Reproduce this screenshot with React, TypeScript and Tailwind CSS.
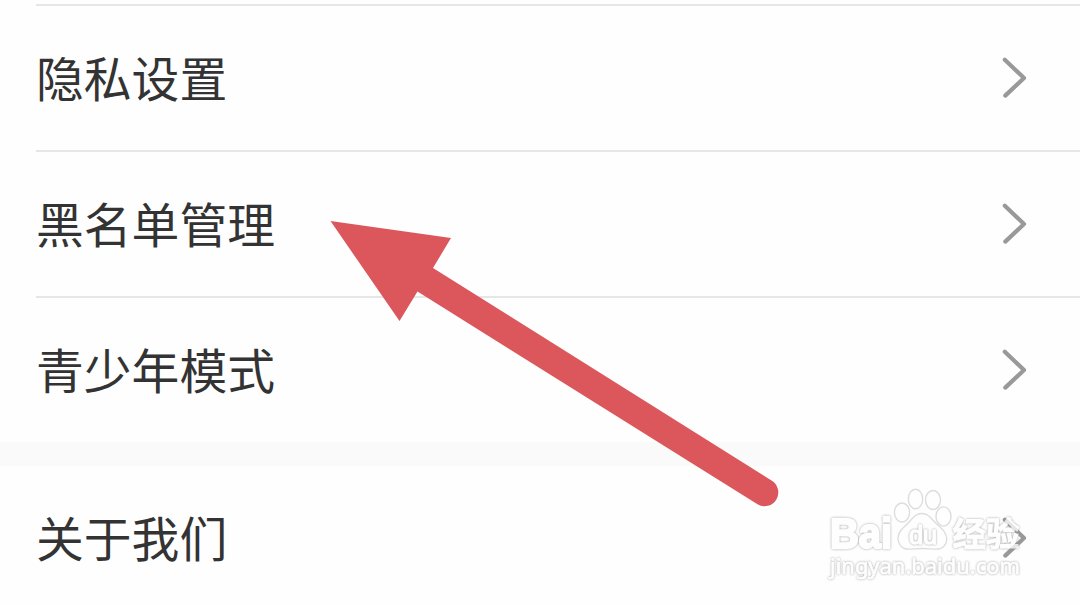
import React from "react";

const groups = [["隐私设置", "黑名单管理", "青少年模式"], ["关于我们"]];

function Chevron() {
  return (
    <svg width="32" height="48" viewBox="0 0 32 48" fill="none" className="shrink-0">
      <path
        d="M4.8 5.8 L24 24 L5.3 41.6"
        stroke="#999999"
        strokeWidth="4.2"
        strokeLinecap="round"
        strokeLinejoin="round"
      />
    </svg>
  );
}

function SettingsRow({ label, divider }: { label: string; divider: boolean }) {
  return (
    <div className="pl-9">
      {divider && <div className="h-0.5 bg-[#e6e6e6]" />}
      <div className="flex h-36 items-center justify-between pr-12">
        <span className="pb-0.5 text-[47.8px] leading-none text-[#333333]">{label}</span>
        <Chevron />
      </div>
    </div>
  );
}

function Arrow() {
  return (
    <svg
      className="pointer-events-none absolute left-[320px] top-[210px]"
      width="470"
      height="306"
      viewBox="320 210 470 306"
    >
      <path
        d="M330.5 221 L451 238 L433 268 L771.5 480.5 A13.8 13.8 0 0 1 757.5 504.3 L417.5 291.5 L399.5 321 Z"
        fill="#dc575c"
      />
    </svg>
  );
}

function Watermark() {
  return (
    <svg
      className="pointer-events-none absolute left-[820px] top-[480px] opacity-75"
      width="220"
      height="110"
      viewBox="820 480 220 110"
    >
      <g fill="#ffffff" stroke="#d2d2d2" strokeWidth="1.4">
        <ellipse cx="915.5" cy="499" rx="7.2" ry="9.8" />
        <ellipse cx="933" cy="500" rx="7.5" ry="9.5" />
        <ellipse cx="902" cy="512.5" rx="7.6" ry="9.5" />
        <ellipse cx="943.5" cy="516.5" rx="7.5" ry="9.6" />
        <path d="M922 513.5 C914 513.5 911 521 905 526 C899 531 896.5 537 899 543 C903 552 910 548.5 922 548.5 C934 548.5 942 552 946 543 C948.5 536 945 531 939 526 C932 521 930 513.5 922 513.5 Z" />
      </g>
      {/* white letters, outlined by their own soft shadow */}
      <g
        className="[filter:drop-shadow(0_0_0.8px_#858585)]"
        fill="#ffffff"
        stroke="#ffffff"
        strokeLinejoin="round"
      >
        <text x="830" y="547.5" fontSize="43" fontWeight="700" strokeWidth="2.4" textLength="62" lengthAdjust="spacingAndGlyphs" fontFamily="Liberation Sans, sans-serif">
          Bai
        </text>
        <text x="909" y="544" fontSize="26" fontWeight="400" strokeWidth="1.4" textLength="28" lengthAdjust="spacingAndGlyphs" fontFamily="Liberation Sans, sans-serif">
          du
        </text>
        <text x="952.5" y="546" fontSize="33.5" fontWeight="700" strokeWidth="1" fontFamily="Noto Sans CJK SC, sans-serif">
          经验
        </text>
        <text x="830" y="574" fontSize="22.5" strokeWidth="0.7" textLength="190" lengthAdjust="spacingAndGlyphs" fontFamily="Noto Sans, sans-serif">
          jingyan.baidu.com
        </text>
      </g>
    </svg>
  );
}

export default function App() {
  return (
    <div className="relative h-[604px] w-[1080px] overflow-hidden bg-[#fefefe] pt-1 font-['Noto_Sans_CJK_SC',sans-serif]">
      {groups.map((labels, group) => (
        <div key={labels[0]}>
          {group > 0 && <div className="h-6 bg-[#fafafa]" />}
          {labels.map((label) => (
            <SettingsRow key={label} label={label} divider={group === 0} />
          ))}
        </div>
      ))}
      <Arrow />
      <Watermark />
    </div>
  );
}
